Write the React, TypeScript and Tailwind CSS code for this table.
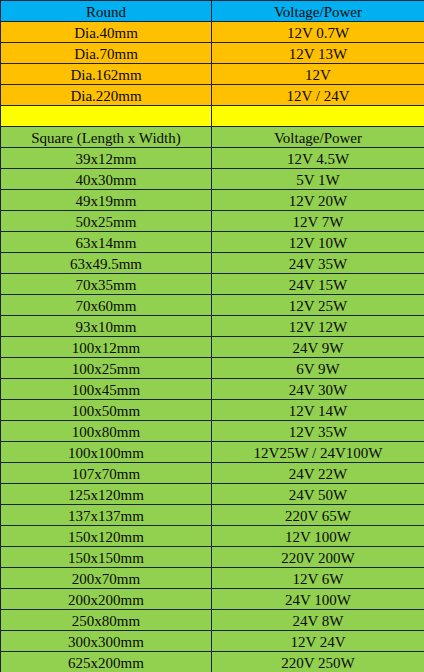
import React from 'react';

type Row = { left: string; right: string; tone: 'head' | 'round' | 'gap' | 'sub' | 'square' };

const rows: Row[] = [
  { left: 'Round', right: 'Voltage/Power', tone: 'head' },
  { left: 'Dia.40mm', right: '12V 0.7W', tone: 'round' },
  { left: 'Dia.70mm', right: '12V 13W', tone: 'round' },
  { left: 'Dia.162mm', right: '12V', tone: 'round' },
  { left: 'Dia.220mm', right: '12V / 24V', tone: 'round' },
  { left: '', right: '', tone: 'gap' },
  { left: 'Square (Length x Width)', right: 'Voltage/Power', tone: 'sub' },
  { left: '39x12mm', right: '12V 4.5W', tone: 'square' },
  { left: '40x30mm', right: '5V 1W', tone: 'square' },
  { left: '49x19mm', right: '12V 20W', tone: 'square' },
  { left: '50x25mm', right: '12V 7W', tone: 'square' },
  { left: '63x14mm', right: '12V 10W', tone: 'square' },
  { left: '63x49.5mm', right: '24V 35W', tone: 'square' },
  { left: '70x35mm', right: '24V 15W', tone: 'square' },
  { left: '70x60mm', right: '12V 25W', tone: 'square' },
  { left: '93x10mm', right: '12V 12W', tone: 'square' },
  { left: '100x12mm', right: '24V 9W', tone: 'square' },
  { left: '100x25mm', right: '6V 9W', tone: 'square' },
  { left: '100x45mm', right: '24V 30W', tone: 'square' },
  { left: '100x50mm', right: '12V 14W', tone: 'square' },
  { left: '100x80mm', right: '12V 35W', tone: 'square' },
  { left: '100x100mm', right: '12V25W / 24V100W', tone: 'square' },
  { left: '107x70mm', right: '24V 22W', tone: 'square' },
  { left: '125x120mm', right: '24V 50W', tone: 'square' },
  { left: '137x137mm', right: '220V 65W', tone: 'square' },
  { left: '150x120mm', right: '12V 100W', tone: 'square' },
  { left: '150x150mm', right: '220V 200W', tone: 'square' },
  { left: '200x70mm', right: '12V 6W', tone: 'square' },
  { left: '200x200mm', right: '24V 100W', tone: 'square' },
  { left: '250x80mm', right: '24V 8W', tone: 'square' },
  { left: '300x300mm', right: '12V 24V', tone: 'square' },
  { left: '625x200mm', right: '220V 250W', tone: 'square' },
];

const toneClass: Record<Row['tone'], string> = {
  head: 'bg-[#00b0f0]',
  round: 'bg-[#ffc000]',
  gap: 'bg-[#ffff00]',
  sub: 'bg-[#92d050]',
  square: 'bg-[#92d050]',
};

const App = () => {
  return (
    <div className="h-[672px] w-[424px] overflow-hidden border-t border-[#1c2336] font-['Liberation_Serif','Times_New_Roman',serif] text-[15px] text-[#0a0a0a]">
      {rows.map((row, index) => (
        <div key={index} className={`flex h-[21px] border-b border-[#1c2336] ${toneClass[row.tone]}`}>
          <div className="flex w-[212px] items-center justify-center border-x border-[#1c2336] pt-[2px] leading-none">
            {row.left}
          </div>
          <div className="flex flex-1 items-center justify-center pt-[2px] leading-none">{row.right}</div>
        </div>
      ))}
    </div>
  );
};

export default App;
